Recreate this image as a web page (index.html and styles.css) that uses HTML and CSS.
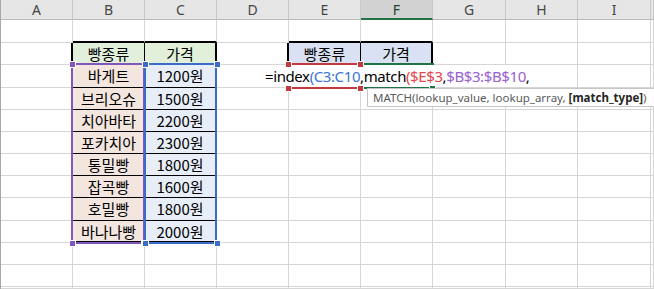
FILE: index.html
```html
<!DOCTYPE html>
<html lang="ko">
<head>
<meta charset="utf-8">
<title>빵 가격 - MATCH</title>
<link rel="stylesheet" href="styles.css">
</head>
<body>
<div class="sheet">
  <div class="grid">
    <div class="h">A</div><div class="h">B</div><div class="h">C</div><div class="h">D</div><div class="h">E</div><div class="h h-sel">F</div><div class="h">G</div><div class="h">H</div><div class="h">I</div><div class="h"></div>

    <div class="c"></div><div class="c tb"></div><div class="c tb"></div><div class="c"></div><div class="c tb"></div><div class="c tb"></div><div class="c"></div><div class="c"></div><div class="c"></div><div class="c"></div>

    <div class="c tl"></div><div class="c th-g th-mid">빵종류</div><div class="c th-g th-end">가격</div><div class="c tl"></div><div class="c th-b th-mid">빵종류</div><div class="c th-b th-end">가격</div><div class="c"></div><div class="c"></div><div class="c"></div><div class="c"></div>

    <div class="c tl"></div><div class="c nm">바게트</div><div class="c pr">1200원</div><div class="c"></div><div class="c"></div><div class="c"></div><div class="c"></div><div class="c"></div><div class="c"></div><div class="c"></div>
    <div class="c tl"></div><div class="c nm">브리오슈</div><div class="c pr">1500원</div><div class="c"></div><div class="c"></div><div class="c"></div><div class="c"></div><div class="c"></div><div class="c"></div><div class="c"></div>
    <div class="c tl"></div><div class="c nm">치아바타</div><div class="c pr">2200원</div><div class="c"></div><div class="c"></div><div class="c"></div><div class="c"></div><div class="c"></div><div class="c"></div><div class="c"></div>
    <div class="c tl"></div><div class="c nm">포카치아</div><div class="c pr">2300원</div><div class="c"></div><div class="c"></div><div class="c"></div><div class="c"></div><div class="c"></div><div class="c"></div><div class="c"></div>
    <div class="c tl"></div><div class="c nm">통밀빵</div><div class="c pr">1800원</div><div class="c"></div><div class="c"></div><div class="c"></div><div class="c"></div><div class="c"></div><div class="c"></div><div class="c"></div>
    <div class="c tl"></div><div class="c nm">잡곡빵</div><div class="c pr">1600원</div><div class="c"></div><div class="c"></div><div class="c"></div><div class="c"></div><div class="c"></div><div class="c"></div><div class="c"></div>
    <div class="c tl"></div><div class="c nm">호밀빵</div><div class="c pr">1800원</div><div class="c"></div><div class="c"></div><div class="c"></div><div class="c"></div><div class="c"></div><div class="c"></div><div class="c"></div>
    <div class="c tl"></div><div class="c nm last">바나나빵</div><div class="c pr last">2000원</div><div class="c"></div><div class="c"></div><div class="c"></div><div class="c"></div><div class="c"></div><div class="c"></div><div class="c"></div>

    <div class="c"></div><div class="c"></div><div class="c"></div><div class="c"></div><div class="c"></div><div class="c"></div><div class="c"></div><div class="c"></div><div class="c"></div><div class="c"></div>
    <div class="c"></div><div class="c"></div><div class="c"></div><div class="c"></div><div class="c"></div><div class="c"></div><div class="c"></div><div class="c"></div><div class="c"></div><div class="c"></div>
    <div class="c"></div><div class="c"></div><div class="c"></div><div class="c"></div><div class="c"></div><div class="c"></div><div class="c"></div><div class="c"></div><div class="c"></div><div class="c"></div>
  </div>

  <div class="row-mark"></div>

  <div class="rng rng-purple"></div>
  <div class="rng rng-blue"></div>
  <div class="rng rng-red"></div>
  <div class="rng rng-green"></div>

  <div class="edit">=index<span class="f-blue">(C3:C10</span>,match<span class="f-red">($E$3</span>,<span class="f-purple">$B$3:$B$10</span>,</div>

  <div class="hd hd-purple hd-pl-t"></div>
  <div class="hd hd-purple hd-pl-b"></div>
  <div class="hd hd-purple hd-pr-b"></div>
  <div class="hd hd-blue hd-bl-t"></div>
  <div class="hd hd-blue hd-br-t"></div>
  <div class="hd hd-blue hd-bl-b"></div>
  <div class="hd hd-blue hd-br-b"></div>
  <div class="hd hd-red hd-rl-t"></div>
  <div class="hd hd-red hd-rr-t"></div>
  <div class="hd hd-red hd-rl-b"></div>
  <div class="hd hd-red hd-rr-b"></div>
  <div class="hd hd-green hd-fill"></div>

  <div class="tip">MATCH(lookup_value, lookup_array, <b>[match_type]</b>)</div>
</div>
</body>
</html>
```

FILE: styles.css
```css
html, body {
  margin: 0;
  padding: 0;
  background: #ffffff;
}

body {
  width: 654px;
  height: 289px;
  overflow: hidden;
  font-family: "Noto Sans CJK KR", "Noto Sans", sans-serif;
}

.sheet {
  position: relative;
  width: 653px;
  height: 289px;
  border-left: 1px solid #a8a8a8;
  overflow: hidden;
}

.grid {
  display: grid;
  grid-template-columns: 72px 72px 72px 72px 72px 72px 73px 72px 73px 1fr;
  grid-template-rows: 20px 23px 22px 23px 22px 22px 22px 22px 22px 23px 22px 22px 22px 1fr;
  height: 289px;
}

.grid > div {
  box-sizing: border-box;
  min-width: 0;
}

/* column headers */
.h {
  background: #e6e6e6;
  border-right: 1px solid #c9c9c9;
  border-bottom: 1px solid #b9b9b9;
  font-family: "Noto Sans", "Open Sans", sans-serif;
  font-size: 14px;
  line-height: 19px;
  color: #454545;
  text-align: center;
}

.h-sel {
  background: #d2d2d2;
  border-bottom: 2px solid #217346;
  color: #1f3f30;
}

/* ordinary cells */
.c {
  border-right: 1px solid #d6d6d6;
  border-bottom: 1px solid #d6d6d6;
  font-size: 15px;
  line-height: 21px;
  text-align: center;
  color: #000000;
  white-space: nowrap;
}

/* thick top edge of the tables sits in the row above */
.c.tb {
  border-bottom: 2px solid #000000;
}

/* thick left edge of the tables sits in the column to the left */
.c.tl {
  border-right: 2px solid #000000;
}

.th-g { background: #e2efda; }
.th-b { background: #d9e1f2; }

.th-mid {
  border-right: 1px solid #000000;
  border-bottom: 2px solid #000000;
}

.th-end {
  border-right: 2px solid #000000;
  border-bottom: 2px solid #000000;
}

.nm {
  background: #f3e6df;
  border-right: 1px solid #000000;
  border-bottom: 1px solid #000000;
}

.pr {
  background: #e8eef8;
  border-right: 2px solid #000000;
  border-bottom: 1px solid #000000;
}

.nm.last,
.pr.last {
  border-bottom: 2px solid #000000;
}

/* selected-row marker on the row header edge */
.row-mark {
  position: absolute;
  left: -1px;
  top: 64px;
  width: 1px;
  height: 24px;
  background: #217346;
}

/* reference range highlights */
.rng {
  position: absolute;
  box-sizing: border-box;
  border: 2px solid;
}

.rng-purple {
  left: 70px;
  top: 63px;
  width: 74px;
  height: 181px;
  border-color: #8257bd;
}

.rng-blue {
  left: 143px;
  top: 63px;
  width: 73px;
  height: 181px;
  border-color: #3a6cc8;
}

.rng-red {
  left: 286px;
  top: 63px;
  width: 74px;
  height: 26px;
  border-color: #c3393f;
}

.rng-green {
  left: 359px;
  top: 63px;
  width: 74px;
  height: 26px;
  border-color: #217346;
}

/* in-cell formula editor */
.edit {
  position: absolute;
  left: 261px;
  top: 65px;
  width: 270px;
  height: 22px;
  box-sizing: border-box;
  padding-left: 3px;
  background: #ffffff;
  font-family: "Noto Sans", "Noto Sans CJK KR", sans-serif;
  font-size: 15px;
  letter-spacing: -0.4px;
  line-height: 22px;
  color: #000000;
  white-space: nowrap;
}

.f-blue { color: #3a74d4; }
.f-red { color: #e3474c; }
.f-purple { color: #9a5fd2; }

/* range handles */
.hd {
  position: absolute;
  width: 5px;
  height: 5px;
  border: 1px solid #ffffff;
}

.hd-purple { background: #8257bd; }
.hd-blue { background: #3a6cc8; }
.hd-red { background: #c3393f; }
.hd-green { background: #217346; }

.hd-pl-t { left: 68px; top: 61px; }
.hd-pl-b { left: 68px; top: 240px; }
.hd-pr-b { left: 140px; top: 240px; }
.hd-bl-t { left: 141px; top: 61px; }
.hd-br-t { left: 213px; top: 61px; }
.hd-bl-b { left: 141px; top: 240px; }
.hd-br-b { left: 213px; top: 240px; }
.hd-rl-t { left: 284px; top: 61px; }
.hd-rr-t { left: 356px; top: 61px; }
.hd-rl-b { left: 284px; top: 85px; }
.hd-rr-b { left: 356px; top: 85px; }
.hd-fill { left: 428px; top: 85px; }

/* function argument tooltip */
.tip {
  position: absolute;
  left: 366px;
  top: 88px;
  width: 300px;
  height: 19px;
  box-sizing: border-box;
  padding-left: 5px;
  border: 1px solid #c6c6c6;
  background: #ffffff;
  font-family: "Noto Sans", "Open Sans", sans-serif;
  font-size: 11.5px;
  line-height: 17px;
  color: #5a5a5a;
  white-space: nowrap;
}

.tip b {
  color: #262626;
  font-weight: 700;
}
```
